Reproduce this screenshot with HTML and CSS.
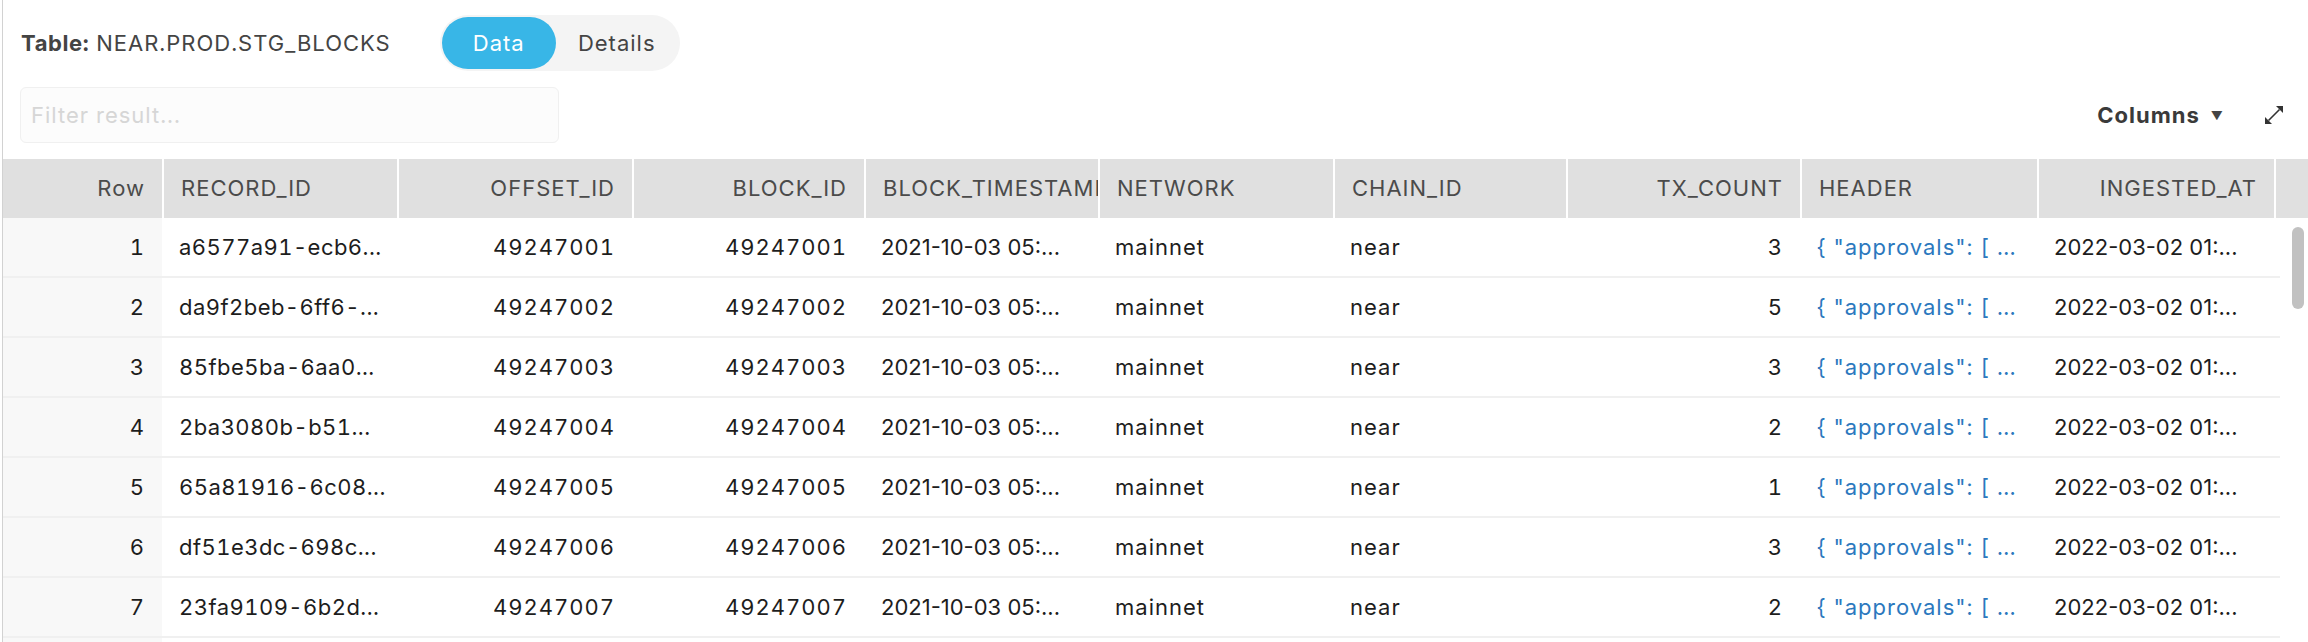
FILE: index.html
```html
<!DOCTYPE html>
<html>
<head>
<meta charset="utf-8">
<link rel="stylesheet" href="styles.css">
</head>
<body>
<div class="app">
  <div class="titlebar">
    <div class="title"><b>Table:</b> NEAR.PROD.STG_BLOCKS</div>
    <div class="toggle">
      <div class="tab active">Data</div>
      <div class="tab">Details</div>
    </div>
  </div>
  <div class="filterbar">
    <div class="filter">Filter result...</div>
    <div class="tools">
      <span class="columns">Columns</span>
      <span class="caret">▼</span>
      <svg class="expand" width="20" height="20" viewBox="0 0 20 20">
        <path d="M12 1 L19 1 L19 8 Z" fill="#333"/>
        <path d="M1 12 L1 19 L8 19 Z" fill="#333"/>
        <path d="M4.5 15.5 L15.5 4.5" stroke="#333" stroke-width="1.6"/>
      </svg>
    </div>
  </div>
  <div class="table">
    <div class="row head">
      <div class="c r rowno">Row</div>
      <div class="c">RECORD_ID</div>
      <div class="c r">OFFSET_ID</div>
      <div class="c r">BLOCK_ID</div>
      <div class="c">BLOCK_TIMESTAMP</div>
      <div class="c">NETWORK</div>
      <div class="c">CHAIN_ID</div>
      <div class="c r">TX_COUNT</div>
      <div class="c">HEADER</div>
      <div class="c r">INGESTED_AT</div>
      <div class="c fill"></div>
    </div>
    <div class="row">
      <div class="c r rowno">1</div><div class="c id">a6577a91-ecb6...</div><div class="c r">49247001</div><div class="c r">49247001</div><div class="c date">2021-10-03 05:...</div><div class="c">mainnet</div><div class="c">near</div><div class="c r">3</div><div class="c json">{ "approvals": [ …</div><div class="c date">2022-03-02 01:...</div>
    </div>
    <div class="row">
      <div class="c r rowno">2</div><div class="c id">da9f2beb-6ff6-...</div><div class="c r">49247002</div><div class="c r">49247002</div><div class="c date">2021-10-03 05:...</div><div class="c">mainnet</div><div class="c">near</div><div class="c r">5</div><div class="c json">{ "approvals": [ …</div><div class="c date">2022-03-02 01:...</div>
    </div>
    <div class="row">
      <div class="c r rowno">3</div><div class="c id">85fbe5ba-6aa0...</div><div class="c r">49247003</div><div class="c r">49247003</div><div class="c date">2021-10-03 05:...</div><div class="c">mainnet</div><div class="c">near</div><div class="c r">3</div><div class="c json">{ "approvals": [ …</div><div class="c date">2022-03-02 01:...</div>
    </div>
    <div class="row">
      <div class="c r rowno">4</div><div class="c id">2ba3080b-b51...</div><div class="c r">49247004</div><div class="c r">49247004</div><div class="c date">2021-10-03 05:...</div><div class="c">mainnet</div><div class="c">near</div><div class="c r">2</div><div class="c json">{ "approvals": [ …</div><div class="c date">2022-03-02 01:...</div>
    </div>
    <div class="row">
      <div class="c r rowno">5</div><div class="c id">65a81916-6c08...</div><div class="c r">49247005</div><div class="c r">49247005</div><div class="c date">2021-10-03 05:...</div><div class="c">mainnet</div><div class="c">near</div><div class="c r">1</div><div class="c json">{ "approvals": [ …</div><div class="c date">2022-03-02 01:...</div>
    </div>
    <div class="row">
      <div class="c r rowno">6</div><div class="c id">df51e3dc-698c...</div><div class="c r">49247006</div><div class="c r">49247006</div><div class="c date">2021-10-03 05:...</div><div class="c">mainnet</div><div class="c">near</div><div class="c r">3</div><div class="c json">{ "approvals": [ …</div><div class="c date">2022-03-02 01:...</div>
    </div>
    <div class="row">
      <div class="c r rowno">7</div><div class="c id">23fa9109-6b2d...</div><div class="c r">49247007</div><div class="c r">49247007</div><div class="c date">2021-10-03 05:...</div><div class="c">mainnet</div><div class="c">near</div><div class="c r">2</div><div class="c json">{ "approvals": [ …</div><div class="c date">2022-03-02 01:...</div>
    </div>
    <div class="row">
      <div class="c r rowno"></div>
    </div>
    <div class="thumb"></div>
  </div>
</div>
</body>
</html>
```

FILE: styles.css
```css
html, body {
  margin: 0;
  padding: 0;
  overflow: hidden;
  background: #fff;
}
body {
  font-family: Inter, "Liberation Sans", sans-serif;
  font-size: 22px;
  letter-spacing: 1px;
  font-variant-numeric: tabular-nums;
  color: #1d1d1d;
}
.app {
  margin-left: 2px;
  border-left: 1px solid #d2d2d2;
  height: 642px;
}
.titlebar {
  display: flex;
  align-items: center;
  height: 56px;
  padding: 15px 0 0 18px;
}
.title {
  color: #444;
  font-size: 22px;
}
.title b {
  font-weight: 700;
  letter-spacing: 0.6px;
}
.toggle {
  margin-left: 49px;
  display: flex;
  padding: 2px;
  background: #f4f4f4;
  border-radius: 28px;
}
.tab {
  height: 52px;
  line-height: 52px;
  text-align: center;
  border-radius: 26px;
  color: #444;
  font-size: 22px;
}
.tab.active {
  width: 114px;
  background: #38b6e7;
  color: #fff;
}
.tab:not(.active) {
  width: 122px;
}
.filterbar {
  display: flex;
  align-items: center;
  justify-content: space-between;
  margin-top: 16px;
  padding: 0 24px 0 17px;
  height: 56px;
}
.filter {
  box-sizing: border-box;
  width: 539px;
  height: 56px;
  border: 1px solid #f0f0f0;
  border-radius: 6px;
  background: #fcfcfc;
  color: #d6d6d6;
  padding-left: 10px;
  line-height: 54px;
  font-size: 22px;
}
.tools {
  display: flex;
  align-items: center;
  color: #3a3a3a;
}
.columns {
  font-weight: 700;
  font-size: 22px;
}
.caret {
  font-size: 12px;
  margin-left: 11px;
  color: #444;
}
.expand {
  margin-left: 40px;
}
.table {
  margin-top: 16px;
  position: relative;
}
.row {
  display: grid;
  grid-template-columns: 159px 235px 235px 232px 234px 235px 233px 234px 237px 237px;
  width: 2277px;
  height: 58px;
  border-bottom: 2px solid #f0f0f0;
}
.row.head {
  grid-template-columns: 159px 235px 235px 232px 234px 235px 233px 234px 237px 237px 1fr;
  width: auto;
  height: 59px;
  border-bottom: none;
}
.c {
  box-sizing: border-box;
  padding: 0 17px;
  white-space: nowrap;
  overflow: hidden;
  line-height: 58px;
}
.r {
  text-align: right;
}
.id {
  letter-spacing: 0.45px;
}
.date {
  letter-spacing: 0;
  font-variant-numeric: normal;
}
.head .c {
  background: #e0e0e0;
  color: #4b4b4b;
  line-height: 59px;
  text-overflow: clip;
}
.head .c + .c {
  border-left: 2px solid #fff;
}
.rowno {
  background: #f8f8f8;
}
.json {
  color: #2b78be;
}
.thumb {
  position: absolute;
  left: 2289px;
  top: 68px;
  width: 12px;
  height: 82px;
  border-radius: 6px;
  background: #c1c1c1;
}
```
